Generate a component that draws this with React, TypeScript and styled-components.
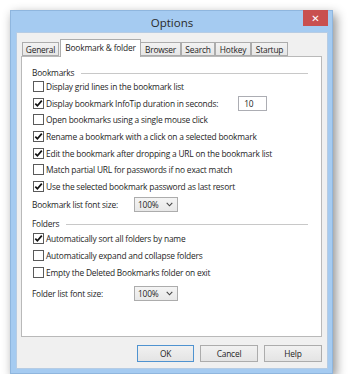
import React from "react";
import styled, { createGlobalStyle } from "styled-components";

const Global = createGlobalStyle`
  html, body { margin: 0; padding: 0; background: #ffffff; }
  body { font-family: "Open Sans", "Noto Sans", sans-serif; color: #1e1e1e; }
`;

const Window = styled.div`
  margin: 10px 0 0 10px;
  width: 323px;
  height: 364px;
  box-sizing: border-box;
  background: #a5cbf1;
  border: 1px solid #8fb6de;
  padding: 0 4px 4px 5px;
  display: flex;
  flex-direction: column;
  box-shadow: 3px 4px 10px rgba(0, 0, 0, 0.45);
`;

const TitleBar = styled.div`
  height: 21px;
  display: grid;
  grid-template-columns: 1fr auto 1fr;
  align-items: center;
`;

const Title = styled.div`
  grid-column: 2;
  font-size: 11.5px;
  color: #2a2a2a;
  line-height: 1;
  padding-top: 2px;
`;

const CloseButton = styled.div`
  grid-column: 3;
  justify-self: end;
  align-self: start;
  margin-top: -1px;
  width: 25px;
  height: 16px;
  background: #c9504f;
  color: #fff;
  font-family: "DejaVu Sans", sans-serif;
  font-size: 10px;
  font-weight: bold;
  display: flex;
  align-items: center;
  justify-content: center;
`;

const Client = styled.div`
  flex: 1;
  background: #f0f0f0;
  border: 1px solid #b6cce4;
  padding: 6px 5px 6px 4px;
  display: flex;
  flex-direction: column;
  font-size: 8.4px;
  letter-spacing: -0.2px;
`;

const TabRow = styled.div`
  height: 17px;
  display: flex;
  align-items: flex-end;
  padding-left: 1px;
  position: relative;
  z-index: 1;
`;

const Tab = styled.div<{ $w: number; $active?: boolean; $ml?: number }>`
  box-sizing: border-box;
  width: ${(p) => p.$w}px;
  margin-left: ${(p) => p.$ml ?? 0}px;
  height: ${(p) => (p.$active ? 18 : 14)}px;
  margin-bottom: ${(p) => (p.$active ? -1 : 0)}px;
  border: 1px solid #acacac;
  border-bottom: ${(p) => (p.$active ? "none" : "1px solid #acacac")};
  background: ${(p) => (p.$active ? "#ffffff" : "linear-gradient(#f2f2f2, #e6e6e6)")};
  display: flex;
  align-items: ${(p) => (p.$active ? "flex-start" : "center")};
  padding-top: ${(p) => (p.$active ? 2 : 0)}px;
  justify-content: center;
  white-space: nowrap;
  color: #1e1e1e;
`;

const Panel = styled.div`
  flex: 1;
  background: #ffffff;
  border: 1px solid #b9b9b9;
  padding: 9px 13px 0 10px;
  display: flex;
  flex-direction: column;
`;

const GroupHeader = styled.div<{ $mt?: number }>`
  height: 12px;
  margin-top: ${(p) => p.$mt ?? 0}px;
  display: flex;
  align-items: center;
  white-space: nowrap;
  &::after {
    content: "";
    flex: 1;
    margin-left: 7px;
    border-top: 1px solid #c8c8c8;
    margin-top: 2px;
  }
`;

const CheckRow = styled.div<{ $h: number }>`
  height: ${(p) => p.$h}px;
  display: flex;
  align-items: center;
  padding-left: 1px;
  white-space: nowrap;
`;

const Box = styled.span`
  box-sizing: border-box;
  width: 11px;
  height: 11px;
  border: 1px solid #5a5a5a;
  background: #fff;
  margin-right: 2px;
  display: inline-flex;
  align-items: center;
  justify-content: center;
  flex: none;
`;

const NumberBox = styled.div`
  box-sizing: border-box;
  margin-left: 20px;
  width: 29px;
  height: 15px;
  border: 1px solid #acadb3;
  padding-left: 5px;
  display: flex;
  align-items: center;
`;

const FontRow = styled.div<{ $mt: number }>`
  margin-top: ${(p) => p.$mt}px;
  display: grid;
  grid-template-columns: 102px 44px;
  align-items: center;
  height: 15px;
  white-space: nowrap;
`;

const Select = styled.div`
  box-sizing: border-box;
  height: 15px;
  border: 1px solid #acacac;
  background: linear-gradient(#f4f4f4, #e8e8e8);
  display: flex;
  align-items: center;
  justify-content: space-between;
  padding: 0 4px 0 3px;
`;

const ButtonRow = styled.div`
  margin-top: 8px;
  display: flex;
  justify-content: flex-end;
  gap: 6px;
`;

const Button = styled.div<{ $w: number; $default?: boolean }>`
  box-sizing: border-box;
  width: ${(p) => p.$w}px;
  height: 17px;
  border: 1px solid ${(p) => (p.$default ? "#4f93d0" : "#acacac")};
  background: linear-gradient(#f1f1f1, #e4e4e4);
  display: flex;
  align-items: center;
  justify-content: center;
  color: #1e1e1e;
`;

const Check = () => (
  <svg width="9" height="9" viewBox="0 0 9 9">
    <path d="M1.3 4.6 L3.4 6.8 L7.8 1.6" fill="none" stroke="#111" strokeWidth="1.7" />
  </svg>
);

const Chevron = () => (
  <svg width="7" height="5" viewBox="0 0 7 5">
    <path d="M0.7 0.8 L3.5 3.8 L6.3 0.8" fill="none" stroke="#444" strokeWidth="1.1" />
  </svg>
);

const CheckItem = ({ checked, children, h }: { checked?: boolean; children: React.ReactNode; h: number }) => (
  <CheckRow $h={h}>
    <Box>{checked && <Check />}</Box>
    {children}
  </CheckRow>
);

export default function App() {
  return (
    <>
      <Global />
      <Window>
        <TitleBar>
          <Title>Options</Title>
          <CloseButton>✕</CloseButton>
        </TitleBar>
        <Client>
          <TabRow>
            <Tab $w={37}>General</Tab>
            <Tab $w={81} $ml={1} $active>Bookmark &amp; folder</Tab>
            <Tab $w={41} $ml={-1}>Browser</Tab>
            <Tab $w={34}>Search</Tab>
            <Tab $w={36}>Hotkey</Tab>
            <Tab $w={37}>Startup</Tab>
          </TabRow>
          <Panel>
            <GroupHeader>Bookmarks</GroupHeader>
            <CheckItem h={16.7}>Display grid lines in the bookmark list</CheckItem>
            <CheckItem h={16.7} checked>
              Display bookmark InfoTip duration in seconds:
              <NumberBox>10</NumberBox>
            </CheckItem>
            <CheckItem h={16.7}>Open bookmarks using a single mouse click</CheckItem>
            <CheckItem h={16.7} checked>Rename a bookmark with a click on a selected bookmark</CheckItem>
            <CheckItem h={16.7} checked>Edit the bookmark after dropping a URL on the bookmark list</CheckItem>
            <CheckItem h={16.7}>Match partial URL for passwords if no exact match</CheckItem>
            <CheckItem h={16.7} checked>Use the selected bookmark password as last resort</CheckItem>
            <FontRow $mt={2}>
              <span>Bookmark list font size:</span>
              <Select>
                <span>100%</span>
                <Chevron />
              </Select>
            </FontRow>
            <GroupHeader $mt={6}>Folders</GroupHeader>
            <CheckItem h={17} checked>Automatically sort all folders by name</CheckItem>
            <CheckItem h={17}>Automatically expand and collapse folders</CheckItem>
            <CheckItem h={17}>Empty the Deleted Bookmarks folder on exit</CheckItem>
            <FontRow $mt={5}>
              <span>Folder list font size:</span>
              <Select>
                <span>100%</span>
                <Chevron />
              </Select>
            </FontRow>
          </Panel>
          <ButtonRow>
            <Button $w={57} $default>OK</Button>
            <Button $w={58}>Cancel</Button>
            <Button $w={58}>Help</Button>
          </ButtonRow>
        </Client>
      </Window>
    </>
  );
}
